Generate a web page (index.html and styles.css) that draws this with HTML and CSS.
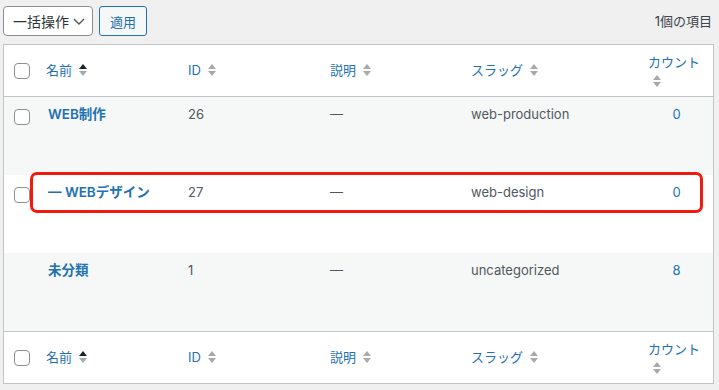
FILE: index.html
```html
<!DOCTYPE html>
<html lang="ja">
<head>
  <meta charset="UTF-8">
  <title>カテゴリー</title>
  <link rel="stylesheet" href="styles.css">
</head>
<body>

  <div class="tablenav">
    <div class="bulk">
      <div class="select">
        <span>一括操作</span>
        <svg class="chevron" width="12" height="7" viewBox="0 0 12 7"><polyline points="1,1 6,6 11,1"/></svg>
      </div>
      <button class="apply">適用</button>
    </div>
    <div class="num-items">1個の項目</div>
  </div>

  <div class="table-wrap">
    <table class="terms">
      <colgroup>
        <col class="col-cb">
        <col class="col-name">
        <col class="col-id">
        <col class="col-desc">
        <col class="col-slug">
        <col class="col-count">
      </colgroup>
      <thead>
        <tr>
          <th class="check"><span class="cb"></span></th>
          <th><a class="sorted"><span class="label">名前</span><svg class="sort" width="8" height="14" viewBox="0 0 8 14"><path class="up" d="M0 6 L4 1 L8 6Z"/><path class="down" d="M0 8 L4 13 L8 8Z"/></svg></a></th>
          <th><a><span class="label">ID</span><svg class="sort" width="8" height="14" viewBox="0 0 8 14"><path class="up" d="M0 6 L4 1 L8 6Z"/><path class="down" d="M0 8 L4 13 L8 8Z"/></svg></a></th>
          <th><a><span class="label">説明</span><svg class="sort" width="8" height="14" viewBox="0 0 8 14"><path class="up" d="M0 6 L4 1 L8 6Z"/><path class="down" d="M0 8 L4 13 L8 8Z"/></svg></a></th>
          <th><a><span class="label">スラッグ</span><svg class="sort" width="8" height="14" viewBox="0 0 8 14"><path class="up" d="M0 6 L4 1 L8 6Z"/><path class="down" d="M0 8 L4 13 L8 8Z"/></svg></a></th>
          <th class="count-head"><a><span class="label">カウント</span><svg class="sort" width="8" height="14" viewBox="0 0 8 14"><path class="up" d="M0 6 L4 1 L8 6Z"/><path class="down" d="M0 8 L4 13 L8 8Z"/></svg></a></th>
        </tr>
      </thead>
      <tbody>
        <tr class="alt">
          <td class="check"><span class="cb"></span></td>
          <td class="name"><a>WEB制作</a></td>
          <td>26</td>
          <td>—</td>
          <td>web-production</td>
          <td class="posts"><a>0</a></td>
        </tr>
        <tr>
          <td class="check"><span class="cb"></span></td>
          <td class="name"><a>— WEBデザイン</a></td>
          <td>27</td>
          <td>—</td>
          <td>web-design</td>
          <td class="posts"><a>0</a></td>
        </tr>
        <tr class="alt">
          <td class="check"></td>
          <td class="name"><a>未分類</a></td>
          <td>1</td>
          <td>—</td>
          <td>uncategorized</td>
          <td class="posts"><a>8</a></td>
        </tr>
      </tbody>
      <tfoot>
        <tr>
          <th class="check"><span class="cb"></span></th>
          <th><a class="sorted"><span class="label">名前</span><svg class="sort" width="8" height="14" viewBox="0 0 8 14"><path class="up" d="M0 6 L4 1 L8 6Z"/><path class="down" d="M0 8 L4 13 L8 8Z"/></svg></a></th>
          <th><a><span class="label">ID</span><svg class="sort" width="8" height="14" viewBox="0 0 8 14"><path class="up" d="M0 6 L4 1 L8 6Z"/><path class="down" d="M0 8 L4 13 L8 8Z"/></svg></a></th>
          <th><a><span class="label">説明</span><svg class="sort" width="8" height="14" viewBox="0 0 8 14"><path class="up" d="M0 6 L4 1 L8 6Z"/><path class="down" d="M0 8 L4 13 L8 8Z"/></svg></a></th>
          <th><a><span class="label">スラッグ</span><svg class="sort" width="8" height="14" viewBox="0 0 8 14"><path class="up" d="M0 6 L4 1 L8 6Z"/><path class="down" d="M0 8 L4 13 L8 8Z"/></svg></a></th>
          <th class="count-head"><a><span class="label">カウント</span><svg class="sort" width="8" height="14" viewBox="0 0 8 14"><path class="up" d="M0 6 L4 1 L8 6Z"/><path class="down" d="M0 8 L4 13 L8 8Z"/></svg></a></th>
        </tr>
      </tfoot>
    </table>

    <!-- annotation around the child category row -->
    <div class="highlight"></div>
  </div>

</body>
</html>
```

FILE: styles.css
```css
body {
  margin: 0;
  background: #f0f0f1;
  font-family: "Inter", "Noto Sans CJK JP", sans-serif;
  font-size: 13px;
  line-height: 19px;
  color: #3c434a;
}

a {
  color: #2271b1;
  text-decoration: none;
}

/* Top bar */
.tablenav {
  display: flex;
  justify-content: space-between;
  align-items: center;
  height: 44px;
  box-sizing: border-box;
  padding: 6px 7px 8px 3px;
}

.bulk {
  display: flex;
  gap: 6px;
}

.select {
  display: flex;
  align-items: center;
  gap: 4px;
  width: 90px;
  height: 30px;
  box-sizing: border-box;
  padding: 0 4px 0 9px;
  background: #fff;
  border: 1px solid #8c8f94;
  border-radius: 4px;
  font-size: 14px;
  color: #2c3338;
  white-space: nowrap;
}

.chevron {
  flex-shrink: 0;
}

.chevron polyline {
  fill: none;
  stroke: #50575e;
  stroke-width: 1.4;
}

.apply {
  width: 48px;
  height: 30px;
  padding: 0;
  background: #f6f7f7;
  border: 1px solid #2271b1;
  border-radius: 3px;
  color: #2271b1;
  font-family: inherit;
  font-size: 13px;
}

.num-items {
  color: #3c434a;
}

/* Table */
.table-wrap {
  position: relative;
  padding-left: 3px;
  width: 711px;
}

.terms {
  width: 711px;
  table-layout: fixed;
  border-collapse: separate;
  border-spacing: 0;
  background: #fff;
  border: 1px solid #c3c4c7;
}

.col-cb { width: 34px; }
.col-name { width: 142px; }
.col-id { width: 142px; }
.col-desc { width: 141px; }
.col-slug { width: 177px; }
.col-count { width: 73px; }

thead tr,
tfoot tr {
  height: 52px;
}

th {
  padding: 0 8px;
  text-align: left;
  font-weight: 400;
  vertical-align: middle;
}

thead th {
  border-bottom: 1px solid #c3c4c7;
}

tfoot th {
  border-top: 1px solid #c3c4c7;
}

th.count-head {
  vertical-align: top;
  padding-top: 8px;
}

.label {
  white-space: nowrap;
}

.sort {
  display: inline-block;
  vertical-align: middle;
  margin: -3px 0 0 7px;
}

.sort path {
  fill: #a7aaad;
}

.sorted .sort .up {
  fill: #1d2327;
}

.count-head .sort {
  margin-left: 5px;
}

tbody tr {
  height: 78px;
}

tbody tr.alt {
  background: #f6f7f7;
}

td {
  padding: 8px;
  vertical-align: top;
  color: #50575e;
}

td.name {
  padding-left: 10px;
  font-weight: 600;
  font-size: 13.5px;
}

td.posts {
  text-align: center;
}

.check {
  padding: 0 0 0 10px;
}

td.check {
  padding-top: 12px;
}

.cb {
  display: block;
  width: 16px;
  height: 16px;
  box-sizing: border-box;
  background: #fff;
  border: 1px solid #8c8f94;
  border-radius: 4px;
}

/* Red annotation box */
.highlight {
  position: absolute;
  left: 30px;
  top: 128px;
  width: 673px;
  height: 41px;
  box-sizing: border-box;
  border: 3px solid #f2190f;
  border-radius: 7px;
}
```
